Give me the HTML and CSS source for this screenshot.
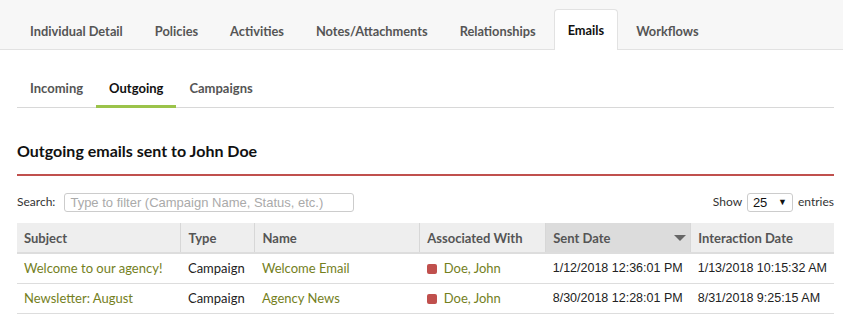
FILE: index.html
```html
<!DOCTYPE html>
<html>
<head>
<meta charset="utf-8">
<link rel="stylesheet" href="styles.css">
</head>
<body>
<div class="topbar">
  <div class="tab">Individual Detail</div>
  <div class="tab">Policies</div>
  <div class="tab">Activities</div>
  <div class="tab">Notes/Attachments</div>
  <div class="tab">Relationships</div>
  <div class="tab active">Emails</div>
  <div class="tab">Workflows</div>
</div>
<div class="content">
  <div class="subtabs">
    <div class="subtab">Incoming</div>
    <div class="subtab active">Outgoing</div>
    <div class="subtab">Campaigns</div>
  </div>
  <h2 class="title">Outgoing emails sent to John Doe</h2>
  <div class="controls">
    <label class="search">Search: <input type="text" placeholder="Type to filter (Campaign Name, Status, etc.)"></label>
    <div class="show">Show <span class="select">25<span class="caret">&#9660;</span></span> entries</div>
  </div>
  <table class="grid">
    <thead>
      <tr>
        <th class="c1">Subject</th>
        <th class="c2">Type</th>
        <th class="c3">Name</th>
        <th class="c4">Associated With</th>
        <th class="c5 sorted">Sent Date<span class="sort"></span></th>
        <th class="c6">Interaction Date</th>
      </tr>
    </thead>
    <tbody>
      <tr>
        <td class="link">Welcome to our agency!</td>
        <td>Campaign</td>
        <td class="link">Welcome Email</td>
        <td class="link"><span class="dot"></span>Doe, John</td>
        <td class="date">1/12/2018 12:36:01 PM</td>
        <td class="date">1/13/2018 10:15:32 AM</td>
      </tr>
      <tr>
        <td class="link">Newsletter: August</td>
        <td>Campaign</td>
        <td class="link">Agency News</td>
        <td class="link"><span class="dot"></span>Doe, John</td>
        <td class="date">8/30/2018 12:28:01 PM</td>
        <td class="date">8/31/2018 9:25:15 AM</td>
      </tr>
    </tbody>
  </table>
</div>
</body>
</html>
```
FILE: styles.css
```css
* { box-sizing: border-box; }
body {
  margin: 0;
  font-family: "Lato", "Open Sans", sans-serif;
  color: #222;
  background: #fff;
}
.topbar {
  display: flex;
  background: #f7f7f7;
  border-bottom: 1px solid #e2e2e2;
  height: 50px;
  padding-left: 14px;
  align-items: flex-end;
}
.tab {
  font-size: 12.8px;
  font-weight: 700;
  color: #555;
  padding: 0 15px;
  height: 40px;
  line-height: 40px;
  margin-bottom: -1px;
  border: 1px solid transparent;
  border-bottom: none;
}
.tab.active {
  background: #fff;
  color: #111;
  border-color: #e2e2e2;
  border-radius: 4px 4px 0 0;
  height: 41px;
  padding: 0 13px;
  margin-left: 2px;
  margin-right: 2px;
}
.content {
  padding: 0 9px 0 17px;
}
.subtabs {
  display: flex;
  margin-top: 23px;
  border-bottom: 1px solid #d8d8d8;
  height: 35px;
}
.subtab {
  font-size: 13px;
  font-weight: 700;
  color: #555;
  padding: 0 13px;
  line-height: 30px;
}
.subtab.active {
  color: #111;
  border-bottom: 3px solid #9bc34a;
  height: 35px;
  margin-bottom: -1px;
}
.title {
  margin: 0;
  margin-top: 32px;
  font-size: 16px;
  font-weight: 700;
  color: #111;
  line-height: 22px;
  padding-bottom: 12px;
  border-bottom: 2px solid #c0504d;
}
.controls {
  display: flex;
  justify-content: space-between;
  align-items: center;
  margin-top: 16px;
  height: 20px;
  font-size: 12px;
  color: #333;
}
.search input {
  width: 290px;
  height: 19px;
  border: 1px solid #ccc;
  border-radius: 3px;
  font-family: "Liberation Sans", Arial, sans-serif;
  font-size: 13px;
  padding: 0 5px;
  margin-left: 6px;
  vertical-align: middle;
}
.search input::placeholder { color: #aaa; }
.select {
  display: inline-flex;
  justify-content: space-between;
  align-items: center;
  width: 46px;
  height: 19px;
  border: 1px solid #ccc;
  border-radius: 3px;
  font-family: "Liberation Sans", Arial, sans-serif;
  font-size: 13px;
  color: #111;
  padding: 0 5px;
  vertical-align: middle;
  margin: 0 2px;
}
.caret { font-size: 9px; }
.grid {
  width: 817px;
  border-collapse: collapse;
  margin-top: 11px;
  font-size: 13px;
}
.grid th {
  background: #eee;
  color: #555;
  font-weight: 700;
  text-align: left;
  height: 30px;
  padding: 0 7px;
  border-left: 1px solid #d7d7d7;
  border-bottom: 2px solid #ddd;
  position: relative;
}
.grid th:first-child { border-left: none; }
.grid th.sorted { background: #dcdcdc; }
.sort {
  position: absolute;
  right: 4px;
  top: 12px;
  width: 0; height: 0;
  border-left: 6px solid transparent;
  border-right: 6px solid transparent;
  border-top: 6px solid #666;
}
.c1 { width: 164px; }
.c2 { width: 74px; }
.c3 { width: 165px; }
.c4 { width: 126px; }
.c5 { width: 145px; }
.grid td {
  height: 30px;
  padding: 0 7px;
  border-bottom: 1px solid #ddd;
  color: #222;
  white-space: nowrap;
}
.grid td.link { color: #74801d; }
.grid td.date {
  font-family: "Liberation Sans", Arial, sans-serif;
  font-size: 12.5px;
  color: #222;
}
.dot {
  display: inline-block;
  width: 10px;
  height: 10px;
  background: #c0504d;
  border-radius: 2px;
  margin-right: 7px;
  vertical-align: -1px;
}
```
